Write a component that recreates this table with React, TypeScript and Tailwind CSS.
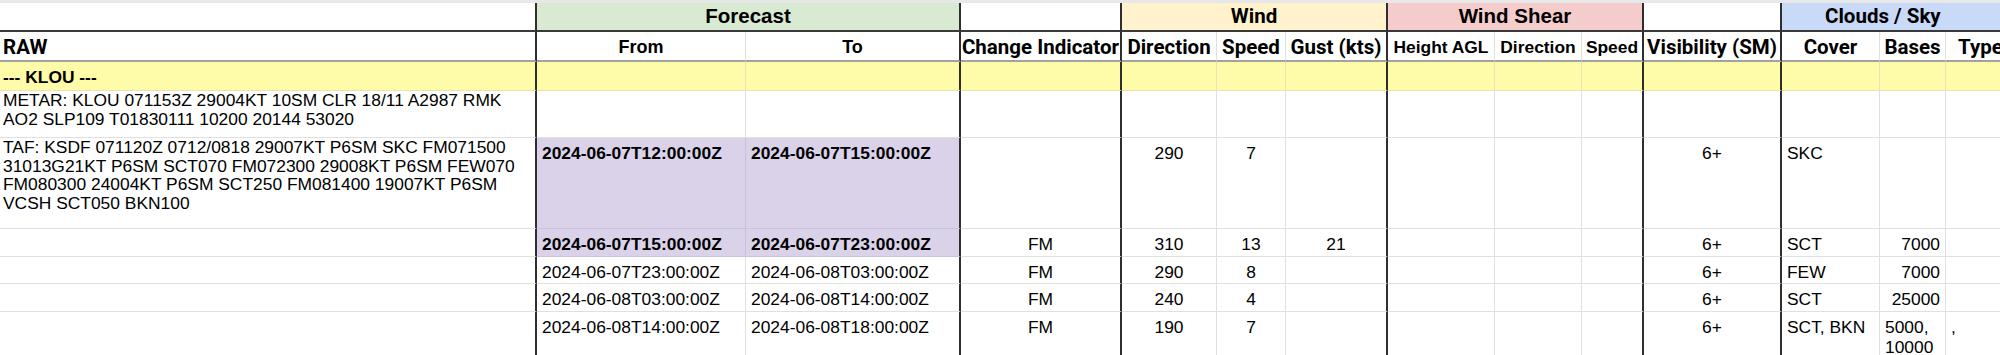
import React from "react";

const A = "font-['Liberation_Sans',Arial,sans-serif]";
const R = "font-['Roboto','Liberation_Sans',sans-serif]";

const DARK = "border-r-2 border-r-[#2e2e2e]";
const LIGHT = "border-r border-r-[#e0e0e0]";
const LIGHT_P = "border-r border-r-[#c9c1dc]";
const RB = [DARK, LIGHT, DARK, DARK, LIGHT, LIGHT, DARK, LIGHT, LIGHT, DARK, DARK, LIGHT, LIGHT, LIGHT];

type Al = "l" | "c" | "r";
type C = { t?: string; a?: Al; b?: boolean; p?: boolean };

const alignCls = (a?: Al) => (a === "c" ? "text-center" : a === "r" ? "text-right" : "text-left");

function DataRow({ cells, raw, rowBg }: { cells: C[]; raw?: string; rowBg?: string }) {
  return (
    <>
      <div className={`${RB[0]} border-b border-b-[#e0e0e0] pl-[3px] pr-[4px] pt-[0px] overflow-hidden ${rowBg ?? "bg-white"}`}>
        {raw && <div className={`${A} text-[17.4px] leading-[18.6px] text-black`}>{raw}</div>}
      </div>
      {cells.map((c, i) => {
        const col = i + 1;
        const border = c.p && RB[col] === LIGHT ? LIGHT_P : RB[col];
        const bb = c.p ? "border-b border-b-[#cbc3dd]" : "border-b border-b-[#e0e0e0]";
        const bg = c.p ? "bg-[#d9d2e9]" : "bg-white";
        return (
          <div key={col} className={`${border} ${bb} ${bg} overflow-hidden px-[5px] pt-[6px]`}>
            {c.t && (
              <div
                className={`${A} text-[17.4px] leading-[19.5px] text-black ${c.b ? "font-bold" : "font-normal"} ${alignCls(c.a)}`}
              >
                {c.t}
              </div>
            )}
          </div>
        );
      })}
    </>
  );
}

const e: C = {};

function row(
  from: string,
  to: string,
  bold: boolean,
  ch: string,
  dir: string,
  spd: string,
  gust: string,
  vis: string,
  cover: string,
  bases: string,
  basesAlign: Al,
  type: string
): C[] {
  return [
    { t: from, b: bold, p: bold },
    { t: to, b: bold, p: bold },
    { t: ch, a: "c" },
    { t: dir, a: "c" },
    { t: spd, a: "c" },
    { t: gust, a: "c" },
    e,
    e,
    e,
    { t: vis, a: "c" },
    { t: cover },
    { t: bases, a: basesAlign },
    { t: type },
  ];
}

export default function App() {
  const group = "flex items-center justify-center border-b-2 border-b-[#3a3a3a]";
  const head = "flex items-center justify-center pt-[3px] border-b-2 border-b-[#a2a2a2] bg-white overflow-hidden whitespace-nowrap";
  const hR = `${R} text-[20.5px] font-bold text-black`;
  const hA = `${A} text-[17.4px] font-bold text-black`;
  const hA2 = `${A} text-[18px] font-bold text-black`;
  const headers: { t: string; f: string; a?: Al }[] = [
    { t: "RAW", f: hR, a: "l" },
    { t: "From", f: hA2 },
    { t: "To", f: hA2 },
    { t: "Change Indicator", f: hR },
    { t: "Direction", f: hR },
    { t: "Speed", f: hR },
    { t: "Gust (kts)", f: hR },
    { t: "Height AGL", f: hA },
    { t: "Direction", f: hA },
    { t: "Speed", f: hA },
    { t: "Visibility (SM)", f: hR },
    { t: "Cover", f: hR },
    { t: "Bases", f: hR },
    { t: "Type", f: hR },
  ];

  return (
    <div className="w-[2000px] h-[355px] overflow-hidden bg-white">
      <div className="h-[3px] bg-[#e8e8e8]" />
      <div className="grid w-[2016px] grid-cols-[537px_209px_215px_161px_95px_69px_102px_107px_87px_62px_138px_98px_66px_70px] grid-rows-[29px_30px_29px_47px_91px_28px_27px_28px_60px]">
        {/* group header row */}
        <div className={`${group} ${DARK} bg-white`} />
        <div className={`${group} ${DARK} col-span-2 bg-[#d9ead3]`}>
          <span className={`${A} text-[20.5px] font-bold text-black`}>Forecast</span>
        </div>
        <div className={`${group} ${DARK} bg-white`} />
        <div className={`${group} ${DARK} col-span-3 bg-[#fff2cc]`}>
          <span className={`${R} text-[20.5px] font-bold text-black`}>Wind</span>
        </div>
        <div className={`${group} ${DARK} col-span-3 bg-[#f4cccc]`}>
          <span className={`${A} text-[20.5px] font-bold text-black`}>Wind Shear</span>
        </div>
        <div className={`${group} ${DARK} bg-white`} />
        <div className={`${group} col-span-3 bg-[#c9daf8] justify-start pl-[43px]`}>
          <span className={`${R} text-[20.5px] font-bold text-black`}>Clouds / Sky</span>
        </div>

        {/* column header row */}
        {headers.map((h, i) => (
          <div
            key={i}
            className={`${head} ${RB[i]} ${h.a === "l" ? "justify-start pl-[3px]" : "justify-center"}`}
          >
            <span className={h.f}>{h.t}</span>
          </div>
        ))}

        {/* KLOU row */}
        {Array.from({ length: 14 }).map((_, i) => (
          <div
            key={`k${i}`}
            className={`${RB[i] === LIGHT ? "border-r border-r-[#e8e6b4]" : RB[i]} border-b border-b-[#e6e4b0] bg-[#fffca9] pl-[3px] pt-[6px]`}
          >
            {i === 0 && (
              <div className={`${A} text-[17.4px] leading-[19px] font-bold text-black`}>--- KLOU ---</div>
            )}
          </div>
        ))}

        {/* METAR row */}
        <DataRow
          raw="METAR: KLOU 071153Z 29004KT 10SM CLR 18/11 A2987 RMK AO2 SLP109 T01830111 10200 20144 53020"
          cells={Array.from({ length: 13 }).map(() => e)}
        />

        {/* TAF row */}
        <DataRow
          raw="TAF: KSDF 071120Z 0712/0818 29007KT P6SM SKC FM071500 31013G21KT P6SM SCT070 FM072300 29008KT P6SM FEW070 FM080300 24004KT P6SM SCT250 FM081400 19007KT P6SM VCSH SCT050 BKN100"
          cells={row("2024-06-07T12:00:00Z", "2024-06-07T15:00:00Z", true, "", "290", "7", "", "6+", "SKC", "", "r", "")}
        />

        <DataRow
          cells={row("2024-06-07T15:00:00Z", "2024-06-07T23:00:00Z", true, "FM", "310", "13", "21", "6+", "SCT", "7000", "r", "")}
        />
        <DataRow
          cells={row("2024-06-07T23:00:00Z", "2024-06-08T03:00:00Z", false, "FM", "290", "8", "", "6+", "FEW", "7000", "r", "")}
        />
        <DataRow
          cells={row("2024-06-08T03:00:00Z", "2024-06-08T14:00:00Z", false, "FM", "240", "4", "", "6+", "SCT", "25000", "r", "")}
        />
        <DataRow
          cells={row("2024-06-08T14:00:00Z", "2024-06-08T18:00:00Z", false, "FM", "190", "7", "", "6+", "SCT, BKN", "5000, 10000", "l", ",")}
        />
      </div>
    </div>
  );
}
